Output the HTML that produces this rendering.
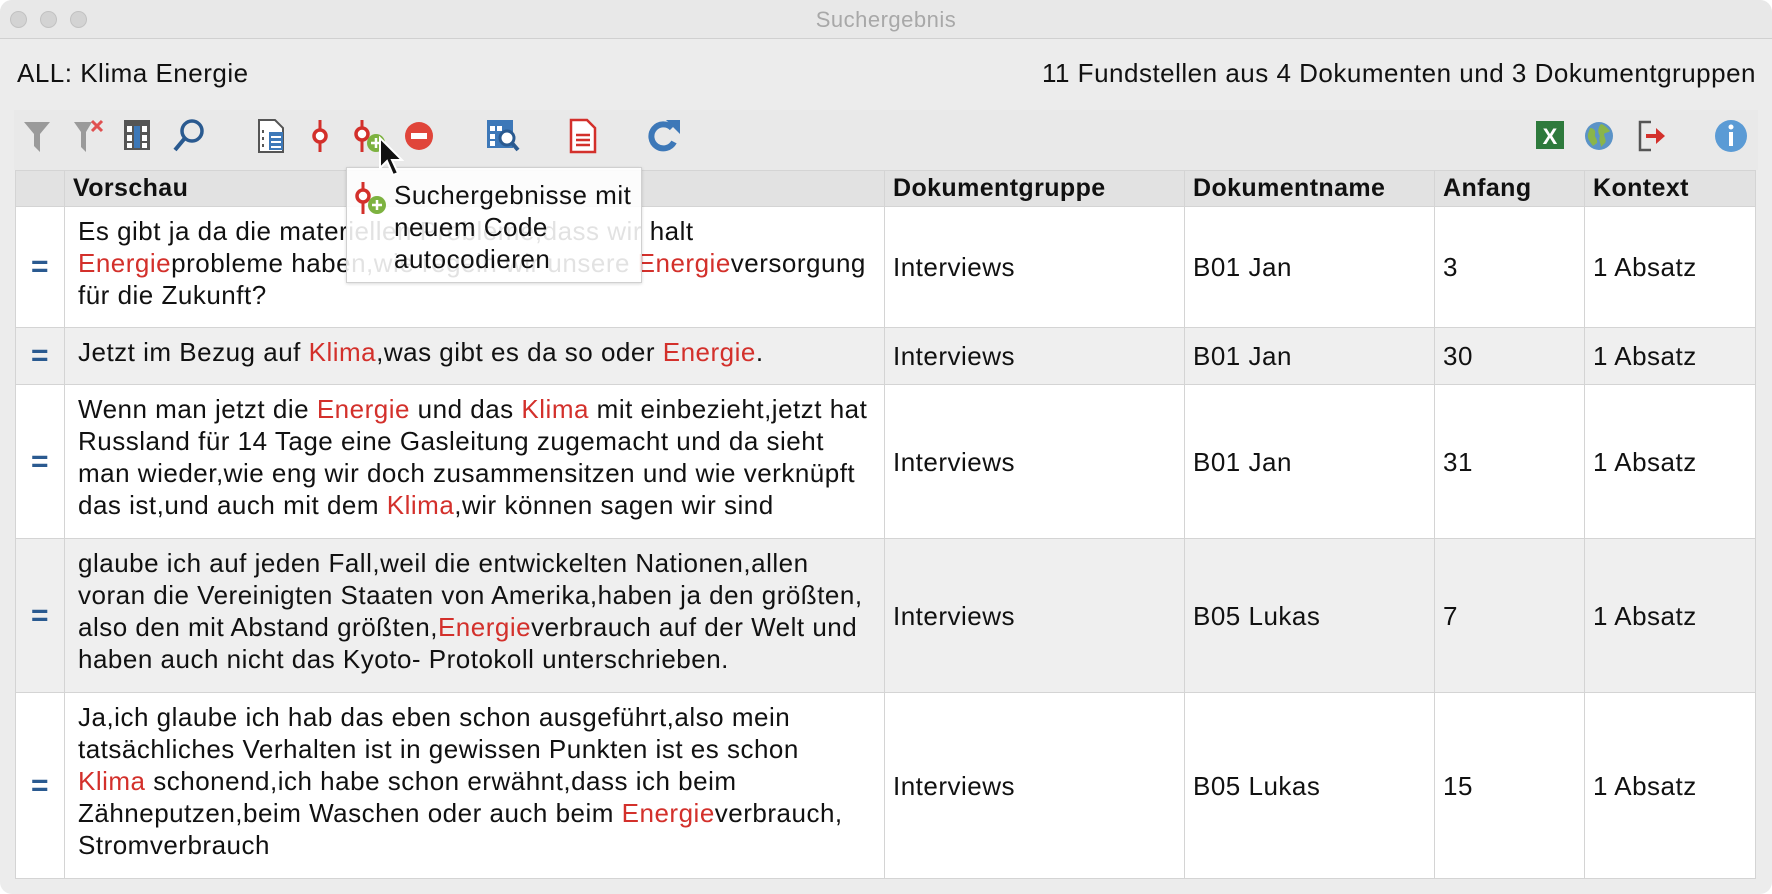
<!DOCTYPE html>
<html><head><meta charset="utf-8"><style>
*{margin:0;padding:0;box-sizing:border-box}
body{width:1772px;height:894px;background:#fff;font-family:"Liberation Sans",sans-serif;overflow:hidden;position:relative}
.win{position:absolute;left:0;top:0;width:1772px;height:894px;background:#ececec;border-radius:12px;overflow:hidden}
.title{position:absolute;left:0;top:0;width:100%;height:39px;background:#e8e8e8;border-bottom:1px solid #d0d0d0;text-align:center;font-size:22px;letter-spacing:0.5px;line-height:39px;color:#a8a8a8}
.dot{position:absolute;top:11px;width:17px;height:17px;border-radius:50%;background:#d3d3d3;border:1px solid #c2c2c2}
.hdr{position:absolute;top:58px;font-size:26px;letter-spacing:0.5px;color:#111}
.tb{position:absolute;left:14px;top:110px;width:1744px;height:60px;background:#e9e9e9}
.ic{position:absolute;top:118px}
table{position:absolute;left:15px;top:170px;width:1741px;border-collapse:collapse;font-size:26px;letter-spacing:0.5px;color:#111}
td,th{border:1px solid #d4d4d4;vertical-align:middle;text-align:left;padding:0 8px;white-space:nowrap}
td.pv{padding-bottom:9px;padding-left:13px}
th{background:#e2e2e2;height:36px;font-weight:bold;font-size:25px;letter-spacing:0.4px}
td{line-height:32px}
tr.g td{background:#efefef}
tr.w td{background:#fff}
.r{color:#d3302b}
.eq{color:#2a5a90;font-weight:bold;font-size:30px;text-align:center;padding:0}
.tip{position:absolute;left:346px;top:167px;width:296px;height:116px;background:rgba(255,255,255,.88);border:1px solid #d0d0d0;font-size:26px;letter-spacing:0.5px;line-height:32px;color:#111;padding:11px 0 0 47px;box-shadow:0 1px 3px rgba(0,0,0,.15)}
</style></head><body><div class="win">
<div class="title">Suchergebnis</div>
<div class="dot" style="left:10px"></div><div class="dot" style="left:40px"></div><div class="dot" style="left:70px"></div>
<div class="hdr" style="left:17px">ALL: Klima Energie</div>
<div class="hdr" style="right:16px">11 Fundstellen aus 4 Dokumenten und 3 Dokumentgruppen</div>
<div class="tb"></div>
<svg class="ic" style="left:22px" width="30" height="36"><path d="M2 4h26l-10 12v18l-6-6V16z" fill="#9a9a9a"/></svg>
<svg class="ic" style="left:72px" width="34" height="36"><path d="M2 4h18l-6 10v20l-5-5V14z" fill="#9a9a9a"/><path d="M20 3l10 10M30 3L20 13" stroke="#e05050" stroke-width="3"/></svg>
<svg class="ic" style="left:123px" width="28" height="34"><rect x="1" y="2" width="26" height="30" fill="#555"/><g fill="#fff"><rect x="4" y="8" width="5" height="6"/><rect x="4" y="17" width="5" height="6"/><rect x="4" y="25" width="5" height="5"/></g><g fill="#3d78b8"><rect x="11" y="8" width="6" height="22"/></g><g fill="#fff"><rect x="19" y="8" width="5" height="6"/><rect x="19" y="17" width="5" height="6"/><rect x="19" y="25" width="5" height="5"/></g></svg>
<svg class="ic" style="left:172px" width="34" height="36"><circle cx="20" cy="13" r="10" fill="none" stroke="#2a5a90" stroke-width="3.5"/><path d="M13 20L3 32" stroke="#2a5a90" stroke-width="4"/></svg>
<svg class="ic" style="left:257px" width="30" height="36"><path d="M2 2h16l8 8v24H2z" fill="#fff" stroke="#555" stroke-width="2"/><g fill="#3d78b8"><rect x="12" y="14" width="14" height="18"/></g><g stroke="#fff" stroke-width="2"><path d="M14 19h10M14 24h10M14 29h10"/></g><path d="M6 12v3M6 19v3M6 26v3" stroke="#555" stroke-width="2"/></svg>
<svg class="ic" style="left:310px" width="20" height="36"><path d="M10 2v32" stroke="#d3302b" stroke-width="3"/><circle cx="10" cy="18" r="6" fill="#fff" stroke="#d3302b" stroke-width="3.5"/></svg>
<svg class="ic" style="left:352px" width="34" height="36"><path d="M10 2v32" stroke="#d3302b" stroke-width="3"/><circle cx="10" cy="16" r="6" fill="#fff" stroke="#d3302b" stroke-width="3.5"/><circle cx="24" cy="25" r="9" fill="#7db240"/><path d="M24 20v10M19 25h10" stroke="#fff" stroke-width="2.5"/></svg>
<svg class="ic" style="left:404px" width="30" height="36"><circle cx="15" cy="18" r="14" fill="#e0453a"/><rect x="7" y="15" width="16" height="6" fill="#fff"/></svg>
<svg class="ic" style="left:485px" width="36" height="36"><rect x="2" y="2" width="26" height="28" fill="#3d78b8"/><g fill="#fff"><rect x="5" y="8" width="5" height="5"/><rect x="12" y="8" width="5" height="5"/><rect x="5" y="16" width="5" height="5"/><rect x="5" y="23" width="5" height="5"/></g><circle cx="22" cy="20" r="7" fill="#fff" stroke="#2a5a90" stroke-width="3"/><path d="M27 25l6 7" stroke="#2a5a90" stroke-width="4"/></svg>
<svg class="ic" style="left:569px" width="28" height="36"><path d="M2 2h16l8 8v24H2z" fill="#fff" stroke="#d3302b" stroke-width="2.5"/><path d="M7 17h14M7 22h14M7 27h14" stroke="#d3302b" stroke-width="2.5"/></svg>
<svg class="ic" style="left:648px" width="34" height="36"><path d="M24 10A12 12 0 1 0 26 24" fill="none" stroke="#3d78b8" stroke-width="6"/><path d="M18 2h14v14z" fill="#3d78b8"/></svg>
<svg class="ic" style="left:1535px" width="30" height="34"><rect x="1" y="3" width="28" height="28" fill="#2e7a3c"/><text x="15" y="26" font-size="22" font-weight="bold" fill="#fff" text-anchor="middle" font-family="Liberation Sans">X</text></svg>
<svg class="ic" style="left:1584px" width="30" height="36"><circle cx="15" cy="18" r="14" fill="#5b93c7"/><path d="M6 10c4 0 6 3 5 6s3 5 2 9l-4 3c-3-4-6-8-5-12zM17 6c4 1 6 4 9 7-2 2-4 1-6 3 0 3 3 6 1 9l-4 4c0-4-3-7-1-11-2-3-3-7 1-12z" fill="#8ab54a"/></svg>
<svg class="ic" style="left:1637px" width="32" height="36"><path d="M14 4H3v28h11" fill="none" stroke="#555" stroke-width="2.5"/><path d="M9 18h12" stroke="#d3302b" stroke-width="4"/><path d="M19 10l9 8-9 8z" fill="#d3302b"/></svg>
<svg class="ic" style="left:1714px" width="34" height="36"><circle cx="17" cy="18" r="16" fill="#5b9bd5"/><circle cx="17" cy="9" r="2.5" fill="#fff"/><rect x="15" y="14" width="4" height="14" fill="#fff"/></svg>
<table>
<tr><th style="width:49px"></th><th style="width:820px">Vorschau</th><th style="width:300px">Dokumentgruppe</th><th style="width:250px">Dokumentname</th><th style="width:150px">Anfang</th><th>Kontext</th></tr>
<tr class="w" style="height:121px"><td class="eq">=</td><td class="pv">Es gibt ja da die materiellen Probleme,dass wir halt<br><span class="r">Energie</span>probleme haben,wie regeln wir unsere <span class="r">Energie</span>versorgung<br>für die Zukunft?</td><td>Interviews</td><td>B01 Jan</td><td>3</td><td>1 Absatz</td></tr>
<tr class="g" style="height:57px"><td class="eq">=</td><td class="pv">Jetzt im Bezug auf <span class="r">Klima</span>,was gibt es da so oder <span class="r">Energie</span>.</td><td>Interviews</td><td>B01 Jan</td><td>30</td><td>1 Absatz</td></tr>
<tr class="w" style="height:154px"><td class="eq">=</td><td class="pv">Wenn man jetzt die <span class="r">Energie</span> und das <span class="r">Klima</span> mit einbezieht,jetzt hat<br>Russland für 14 Tage eine Gasleitung zugemacht und da sieht<br>man wieder,wie eng wir doch zusammensitzen und wie verknüpft<br>das ist,und auch mit dem <span class="r">Klima</span>,wir können sagen wir sind</td><td>Interviews</td><td>B01 Jan</td><td>31</td><td>1 Absatz</td></tr>
<tr class="g" style="height:154px"><td class="eq">=</td><td class="pv">glaube ich auf jeden Fall,weil die entwickelten Nationen,allen<br>voran die Vereinigten Staaten von Amerika,haben ja den größten,<br>also den mit Abstand größten,<span class="r">Energie</span>verbrauch auf der Welt und<br>haben auch nicht das Kyoto- Protokoll unterschrieben.</td><td>Interviews</td><td>B05 Lukas</td><td>7</td><td>1 Absatz</td></tr>
<tr class="w" style="height:186px"><td class="eq">=</td><td class="pv">Ja,ich glaube ich hab das eben schon ausgeführt,also mein<br>tatsächliches Verhalten ist in gewissen Punkten ist es schon<br><span class="r">Klima</span> schonend,ich habe schon erwähnt,dass ich beim<br>Zähneputzen,beim Waschen oder auch beim <span class="r">Energie</span>verbrauch,<br>Stromverbrauch</td><td>Interviews</td><td>B05 Lukas</td><td>15</td><td>1 Absatz</td></tr>
</table>
<div class="tip">Suchergebnisse mit<br>neuem Code<br>autocodieren
<svg style="position:absolute;left:6px;top:12px" width="34" height="36"><path d="M10 2v32" stroke="#d3302b" stroke-width="3"/><circle cx="10" cy="16" r="6" fill="#fff" stroke="#d3302b" stroke-width="3.5"/><circle cx="24" cy="25" r="9" fill="#7db240"/><path d="M24 20v10M19 25h10" stroke="#fff" stroke-width="2.5"/></svg></div>
<svg style="position:absolute;left:378px;top:136px" width="26" height="42"><path d="M2 2v30l7-7 6 14 5-2-6-13h10z" fill="#111" stroke="#fff" stroke-width="2"/></svg>
</div></body></html>
